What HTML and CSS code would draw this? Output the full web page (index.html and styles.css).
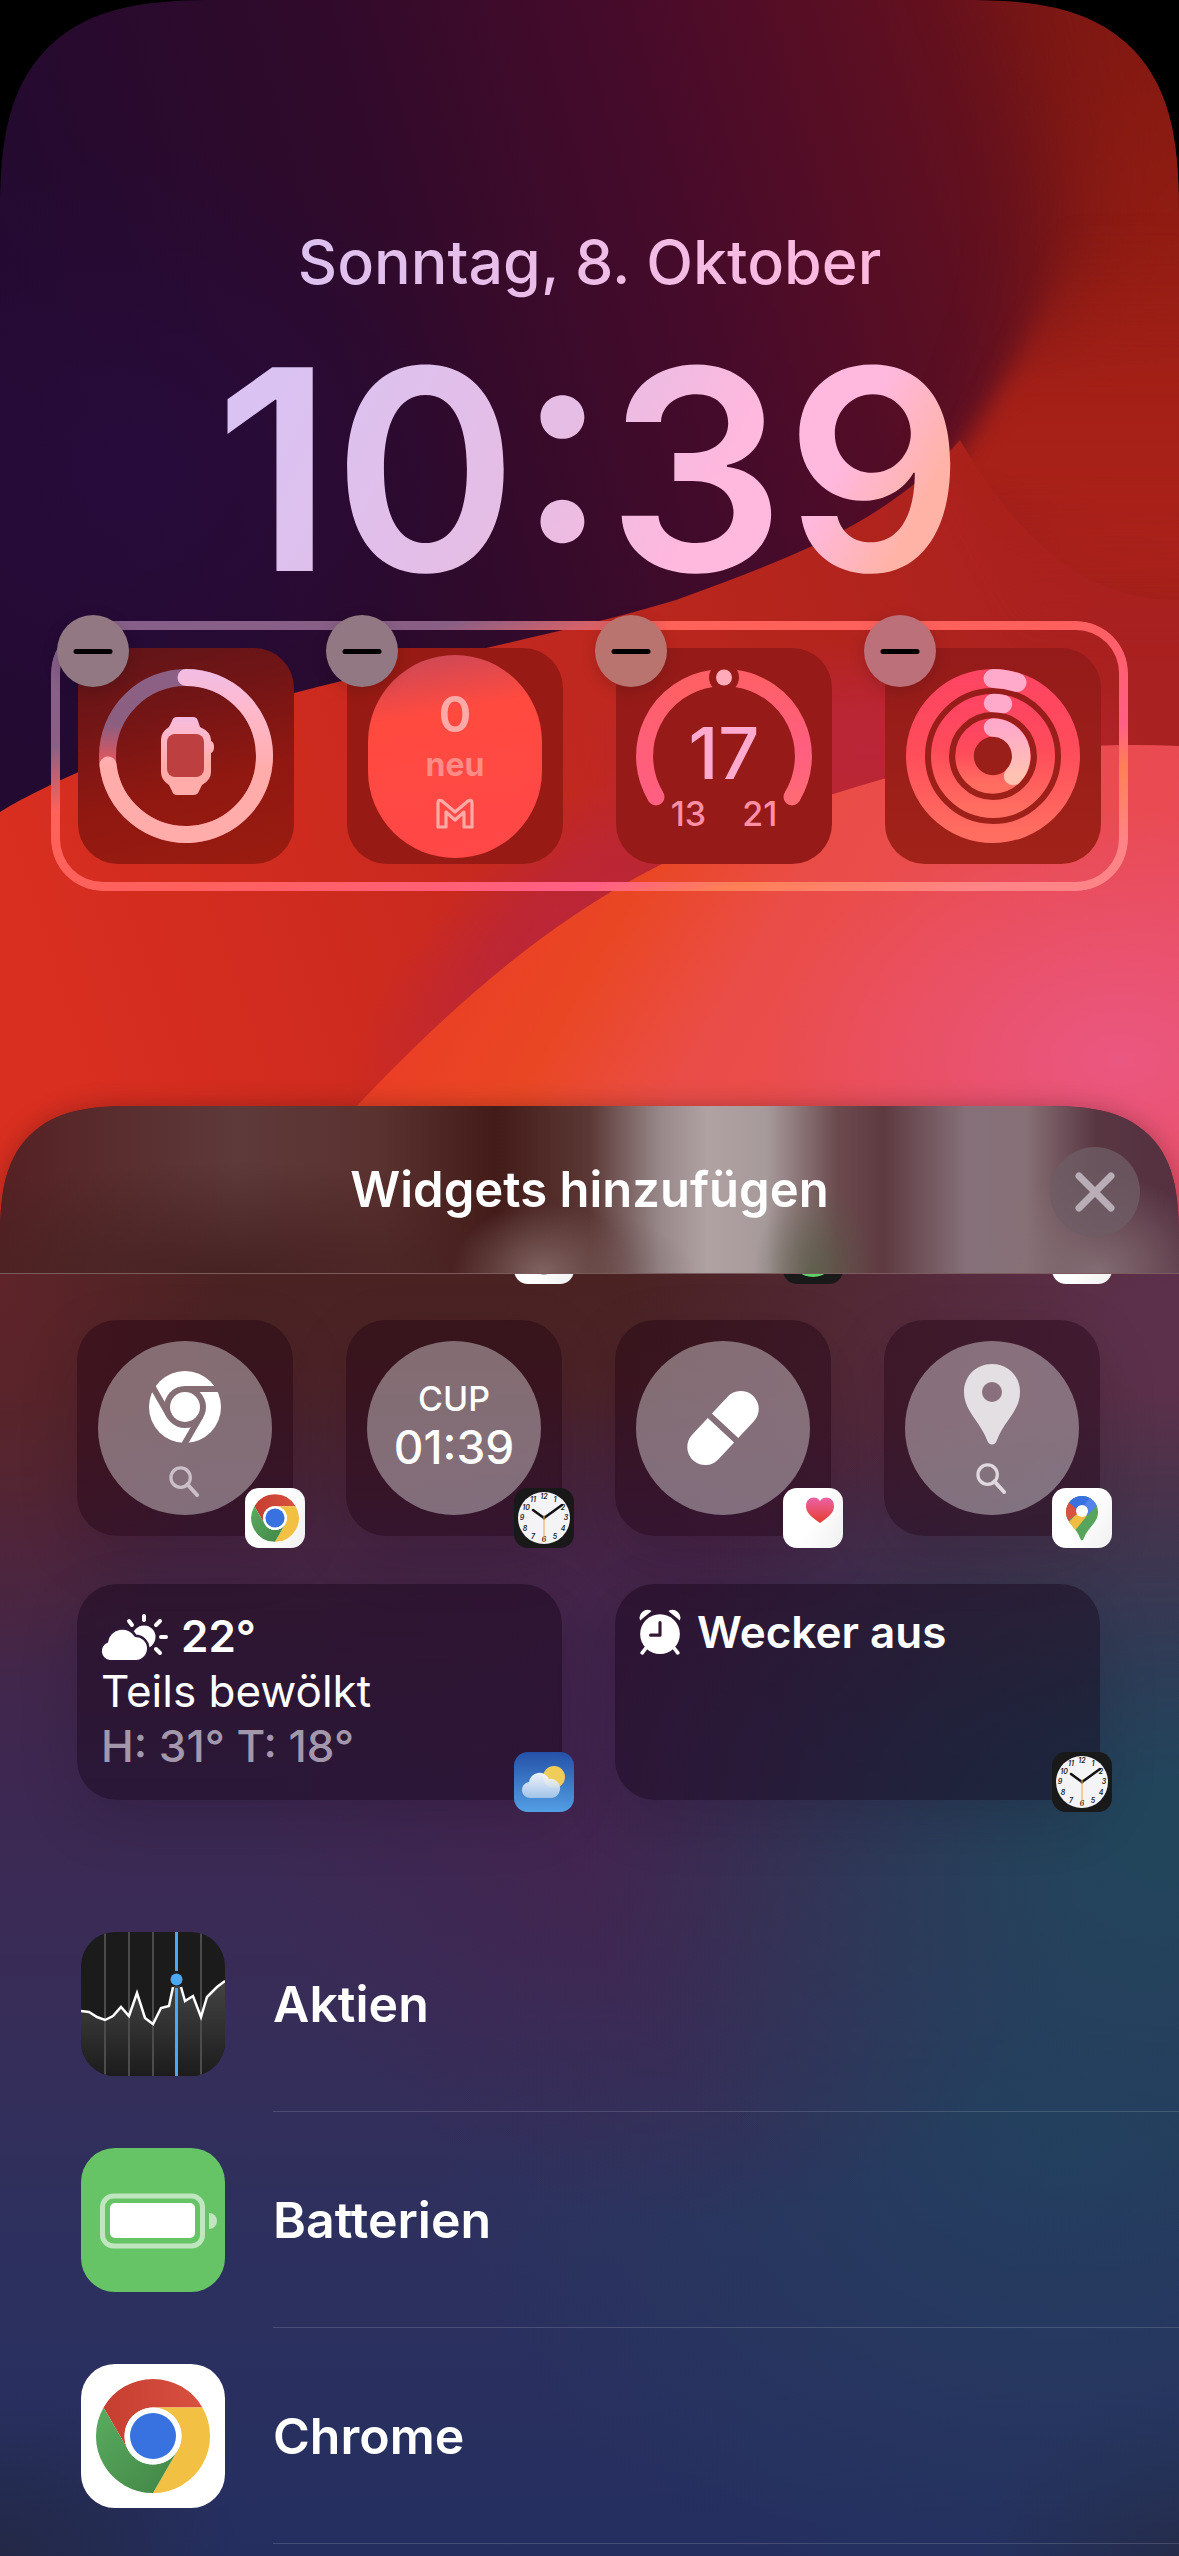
FILE: index.html
```
<!DOCTYPE html>
<html lang="de">
<head>
    <meta charset="UTF-8">
    <meta name="viewport" content="width=device-width, initial-scale=1.0">
    <title>Widgets hinzufügen</title>
    <link rel="stylesheet" href="styles.css">
</head>
<body>
    <!-- Shared gradients -->
    <svg class="defs" aria-hidden="true">
        <defs>
            <linearGradient id="chrome-red" x1="0" x2="1"><stop offset="0" stop-color="#c53e30"/><stop offset="1" stop-color="#d85040"/></linearGradient>
            <linearGradient id="chrome-green" x1="0" y1="0" x2="1" y2="1"><stop offset="0" stop-color="#5aac60"/><stop offset="1" stop-color="#418545"/></linearGradient>
            <linearGradient id="pink" x1="0" y1="0" x2="0" y2="1"><stop offset="0" stop-color="#ff4562"/><stop offset=".45" stop-color="#ff4c5a"/><stop offset="1" stop-color="#ff6e60"/></linearGradient>
        </defs>
    </svg>

    <!-- Shared icons -->
    <svg class="symbols" aria-hidden="true">
        <symbol id="chrome" viewBox="-72 -72 144 144">
            <path fill="url(#chrome-red)" d="M-49.4-28.5A57 57 0 0 1 49.4-28.5H0A28.5 28.5 0 0 0-24.7 14.25Z"/>
            <path fill="#f2c144" d="M49.4-28.5A57 57 0 0 1 0 57L24.7 14.25A28.5 28.5 0 0 0 0-28.5Z"/>
            <path fill="url(#chrome-green)" d="M0 57A57 57 0 0 1-49.4-28.5L-24.7 14.25A28.5 28.5 0 0 0 24.7 14.25Z"/>
            <circle r="28.5" fill="#fff"/>
            <circle r="23" fill="#3871e0"/>
        </symbol>
        <symbol id="clock" viewBox="0 0 60 60">
            <circle cx="30" cy="30" r="26" fill="#f4f4f7"/>
            <g class="clock-digits">
                <text x="30" y="11">12</text><text x="41" y="14">1</text><text x="49" y="22">2</text><text x="52" y="32">3</text>
                <text x="49" y="43">4</text><text x="41" y="51">5</text><text x="30" y="54">6</text><text x="19" y="51">7</text>
                <text x="11" y="43">8</text><text x="8" y="32">9</text><text x="12" y="22">10</text><text x="19" y="14">11</text>
            </g>
            <path d="M30 30 19 22M30 30 48 17" stroke="#111" stroke-width="2.5" stroke-linecap="round"/>
            <path d="M30 27V54" stroke="#efb35a" stroke-width="1.2"/>
            <circle cx="30" cy="30" r="1.5" fill="#8a6530"/>
        </symbol>
        <symbol id="lens" viewBox="0 0 32 32">
            <circle cx="12" cy="12" r="10" fill="none" stroke="currentColor" stroke-width="3.4"/>
            <path d="M19 19 29 30" stroke="currentColor" stroke-width="4" stroke-linecap="round"/>
        </symbol>
        <symbol id="minus" viewBox="0 0 72 72">
            <path d="M19 36.5H53" stroke="#000" stroke-width="5" stroke-linecap="round"/>
        </symbol>
    </svg>

    <main class="phone">
        <svg class="wallpaper" viewBox="0 0 1179 1300" preserveAspectRatio="none" aria-hidden="true">
            <defs>
                <linearGradient id="night" gradientUnits="userSpaceOnUse" x1="0" y1="360" x2="1050" y2="60">
                    <stop offset="0" stop-color="#220a30"/><stop offset=".35" stop-color="#2f0a2b"/><stop offset=".65" stop-color="#480b2a"/><stop offset=".85" stop-color="#5c0f22"/><stop offset="1" stop-color="#701418"/>
                </linearGradient>
                <linearGradient id="side" gradientUnits="userSpaceOnUse" x1="900" y1="0" x2="1020" y2="620">
                    <stop offset="0" stop-color="#7d1812"/><stop offset=".5" stop-color="#941d13"/><stop offset="1" stop-color="#ad2319"/>
                </linearGradient>
                <linearGradient id="fade" gradientUnits="userSpaceOnUse" x1="0" y1="230" x2="0" y2="640">
                    <stop offset="0" stop-color="#981e14" stop-opacity="0"/><stop offset=".4" stop-color="#a42017"/><stop offset=".6" stop-color="#a92118"/><stop offset="1" stop-color="#a92020" stop-opacity="0"/>
                </linearGradient>
                <linearGradient id="red" gradientUnits="userSpaceOnUse" x1="0" y1="960" x2="1100" y2="600">
                    <stop offset="0" stop-color="#d92f20"/><stop offset=".36" stop-color="#cb2a1e"/><stop offset=".55" stop-color="#bf281f"/><stop offset=".72" stop-color="#b5251c"/><stop offset="1" stop-color="#a92120"/>
                </linearGradient>
                <linearGradient id="orange" gradientUnits="userSpaceOnUse" x1="520" y1="850" x2="1050" y2="1160">
                    <stop offset="0" stop-color="#ea3f25"/><stop offset=".2" stop-color="#e94724"/><stop offset=".42" stop-color="#ea4d48"/><stop offset="1" stop-color="#e94a56"/>
                </linearGradient>
                <radialGradient id="glow"><stop offset="0" stop-color="#270b3b"/><stop offset="1" stop-color="#270b3b" stop-opacity="0"/></radialGradient>
                <radialGradient id="wine"><stop offset="0" stop-color="#bb2638"/><stop offset=".4" stop-color="#bb2638" stop-opacity=".8"/><stop offset="1" stop-color="#bb2638" stop-opacity="0"/></radialGradient>
                <radialGradient id="rose"><stop offset="0" stop-color="#ea5780"/><stop offset="1" stop-color="#ea5780" stop-opacity="0"/></radialGradient>
                <filter id="soft" x="-50%" y="-30%" width="200%" height="160%" color-interpolation-filters="sRGB"><feGaussianBlur stdDeviation="46"/></filter>
                <filter id="softer" x="-30%" y="-30%" width="160%" height="160%" color-interpolation-filters="sRGB"><feGaussianBlur stdDeviation="12"/></filter>
            </defs>
            <rect width="1179" height="1300" fill="url(#night)"/>
            <ellipse cx="130" cy="470" rx="380" ry="330" fill="url(#glow)"/>
            <path d="M960-150C1060 60 1100 210 1050 360C1020 450 980 540 920 640H1400V-150Z" fill="url(#side)" filter="url(#soft)"/>
            <path d="M0 812C60 775 180 728 294 693C420 660 560 635 676 600C800 555 890 520 960 440C1030 560 1100 600 1179 600V1300H0Z" fill="url(#red)"/>
            <path d="M1078 190C1060 280 1030 350 952 464L1040 660H1500V190Z" fill="url(#fade)" filter="url(#softer)"/>
            <ellipse cx="870" cy="750" rx="290" ry="110" fill="url(#wine)"/>
            <ellipse cx="570" cy="930" rx="280" ry="110" fill="url(#wine)" transform="rotate(-42 570 930)"/>
            <path d="M353 1110C480 975 590 890 720 838C850 780 1000 738 1179 746V1300H200Z" fill="url(#orange)"/>
            <ellipse cx="1120" cy="1060" rx="360" ry="250" fill="url(#rose)"/>
        </svg>

        <header class="lock">
            <p class="date">Sonntag, 8. Oktober</p>
            <p class="time">10:39</p>

            <section class="frame" aria-label="Aktive Widgets">
                <div class="tile">
                    <svg viewBox="0 0 216 216">
                        <defs>
                            <linearGradient id="track" x1="0" y1="0" x2="0" y2="1"><stop offset="0" stop-color="#8c6085"/><stop offset=".3" stop-color="#8c5f80"/><stop offset=".55" stop-color="#e6555c"/></linearGradient>
                            <linearGradient id="level" x1="0" y1="0" x2="0" y2="1"><stop offset="0" stop-color="#f3bce0"/><stop offset=".2" stop-color="#ffb9cc"/><stop offset=".6" stop-color="#ffacaa"/></linearGradient>
                        </defs>
                        <circle cx="108" cy="108" r="78.5" fill="none" stroke="url(#track)" stroke-width="17"/>
                        <path d="M108 29.5A78.5 78.5 0 1 1 30 117" fill="none" stroke="url(#level)" stroke-width="17" stroke-linecap="round"/>
                        <path fill="url(#level)" d="M99 69H115Q119 69 120 73L122 79Q133 84 133 92V93Q136 94 136 99T133 105V124Q133 132 124 137L121 143Q120 147 115 147H99Q95 147 94 143L91 137Q83 132 83 124V92Q83 84 91 79L94 73Q95 69 99 69Z"/>
                        <rect x="89" y="86" width="37" height="43" rx="8" fill="#bd3f40"/>
                    </svg>
                    <button class="remove" aria-label="Entfernen"><svg><use href="#minus"/></svg></button>
                </div>
                <div class="tile">
                    <div class="mail">
                        <span class="count">0</span>
                        <span class="unit">neu</span>
                        <svg class="gmail" viewBox="0 0 40 32"><path d="M3 29V5Q3 1 7 3L20 14 33 3Q37 1 37 5V29H29V14L20 22 11 14V29Z" fill="none" stroke="#ffaaa5" stroke-width="3.2" stroke-linejoin="round"/></svg>
                    </div>
                    <button class="remove" aria-label="Entfernen"><svg><use href="#minus"/></svg></button>
                </div>
                <div class="tile">
                    <svg viewBox="0 0 216 216">
                        <defs>
                            <linearGradient id="arc-left" x1="1" y1="0" x2="0" y2="1"><stop offset=".3" stop-color="#ff6065"/><stop offset="1" stop-color="#ff5f80"/></linearGradient>
                            <linearGradient id="arc-right" x1="0" y1="0" x2="0" y2="1"><stop offset="0" stop-color="#ff6068"/><stop offset=".6" stop-color="#ff5f80"/><stop offset="1" stop-color="#ff6a75"/></linearGradient>
                        </defs>
                        <path d="M40 149A78.5 78.5 0 0 1 96 30.5" fill="none" stroke="url(#arc-left)" stroke-width="17"/>
                        <path d="M120 30.5A78.5 78.5 0 0 1 176 149" fill="none" stroke="url(#arc-right)" stroke-width="17"/>
                        <circle cx="40" cy="149" r="8.5" fill="#ff5f80"/>
                        <circle cx="176" cy="149" r="8.5" fill="#ff6a75"/>
                        <circle cx="108" cy="29.5" r="15" fill="#961b18"/>
                        <circle cx="108" cy="29.5" r="8" fill="#ffabba"/>
                    </svg>
                    <div class="gauge">
                        <span class="now">17</span>
                        <span class="range"><span>13</span><span>21</span></span>
                    </div>
                    <button class="remove" aria-label="Entfernen"><svg><use href="#minus"/></svg></button>
                </div>
                <div class="tile">
                    <svg viewBox="0 0 216 216" fill="none">
                        <defs><linearGradient id="move" x1="0" y1="0" x2="0" y2="1"><stop offset="0" stop-color="#ffaaca"/><stop offset="1" stop-color="#ffc2b0"/></linearGradient></defs>
                        <circle cx="108" cy="108" r="77.5" stroke="url(#pink)" stroke-width="19"/>
                        <circle cx="108" cy="108" r="53" stroke="url(#pink)" stroke-width="18"/>
                        <circle cx="108" cy="108" r="28.5" stroke="url(#pink)" stroke-width="18.5"/>
                        <g stroke="#ffaaca" stroke-linecap="round">
                            <path d="M108 30.5A77.5 77.5 0 0 1 132 34.5" stroke-width="19"/>
                            <path d="M108 55A53 53 0 0 1 118 56" stroke-width="18.5"/>
                            <path d="M108 79.5A28.5 28.5 0 0 1 128 128" stroke="url(#move)" stroke-width="18.5"/>
                        </g>
                    </svg>
                    <button class="remove" aria-label="Entfernen"><svg><use href="#minus"/></svg></button>
                </div>
            </section>
        </header>

        <section class="sheet">
            <header class="sheet-head">
                <h1>Widgets hinzufügen</h1>
                <button class="close" aria-label="Schließen">
                    <svg viewBox="0 0 90 90"><path d="M29 29 61 61M61 29 29 61" stroke="#b9adb6" stroke-width="7" stroke-linecap="round"/></svg>
                </button>
            </header>

            <!-- Lower edge of the row that has scrolled under the header -->
            <div class="tiles scrolled">
                <span></span>
                <span class="cut"><i class="app white"><svg viewBox="0 0 60 60"><circle cx="30" cy="44" r="7" fill="#aaa"/></svg></i></span>
                <span class="cut"><i class="app black"><svg viewBox="0 0 60 60"><circle cx="30" cy="30" r="23" fill="#5fd068"/></svg></i></span>
                <span class="cut"><i class="app white"></i></span>
            </div>

            <div class="tiles">
                <a href="#chrome-widget" class="tile">
                    <svg viewBox="0 0 216 216">
                        <mask id="cuts">
                            <circle r="36" fill="#fff"/><circle r="21" fill="#000"/><circle r="15" fill="#fff"/>
                            <g stroke="#000" stroke-width="6"><path d="M0-18H40"/><path d="M0-18H40" transform="rotate(120)"/><path d="M0-18H40" transform="rotate(240)"/></g>
                        </mask>
                        <circle class="disc" cx="108" cy="108" r="87"/>
                        <g transform="translate(108 87)"><circle r="37" fill="#fff" mask="url(#cuts)"/></g>
                        <use href="#lens" x="92" y="146" width="31" height="31" color="#cbc0c9"/>
                    </svg>
                    <i class="app white"><svg><use href="#chrome"/></svg></i>
                </a>
                <a href="#clock-widget" class="tile">
                    <span class="round"><span class="city">CUP</span><span class="city-time">01:39</span></span>
                    <i class="app black"><svg><use href="#clock"/></svg></i>
                </a>
                <a href="#health-widget" class="tile">
                    <svg viewBox="0 0 216 216">
                        <circle class="disc" cx="108" cy="108" r="87"/>
                        <g transform="rotate(-47 108 108)" fill="#fff">
                            <path d="M105 90V126H82A18 18 0 0 1 82 90Z"/>
                            <path d="M111 90V126H134A18 18 0 0 0 134 90Z"/>
                        </g>
                    </svg>
                    <i class="app white"><svg viewBox="0 0 60 60"><defs><linearGradient id="heart" x1="0" y1="0" x2="0" y2="1"><stop offset="0" stop-color="#ea62a8"/><stop offset="1" stop-color="#e73d2c"/></linearGradient></defs><path fill="url(#heart)" d="M37 35C27 28 23 24 23 18C23 9 33 7 37 13C41 7 51 9 51 18C51 24 47 28 37 35Z"/></svg></i>
                </a>
                <a href="#maps-widget" class="tile">
                    <svg viewBox="0 0 216 216">
                        <circle class="disc" cx="108" cy="108" r="87"/>
                        <path fill="#e4dfe3" fill-rule="evenodd" d="M108 44C92 44 80 56 80 72C80 91 96 101 103 120C105 126 111 126 113 120C120 101 136 91 136 72C136 56 124 44 108 44ZM108 62A10 10 0 1 1 108 82A10 10 0 1 1 108 62Z"/>
                        <use href="#lens" x="92" y="143" width="31" height="31" color="#dfd9de"/>
                    </svg>
                    <i class="app white">
                        <svg viewBox="0 0 60 60">
                            <clipPath id="pin"><path d="M30 8C21 8 14 15 14 24C14 35 24 39 28 50Q30 55 32 50C36 39 46 35 46 24C46 15 39 8 30 8Z"/></clipPath>
                            <g clip-path="url(#pin)">
                                <path fill="#57a55c" d="M0 0H60V60H0Z"/>
                                <path fill="#f0bd42" d="M0 52 32 18 38 24 12 56Z"/>
                                <path fill="#d95140" d="M8 8H22L30 22 12 36Z"/>
                                <path fill="#3871e0" d="M14 12 34 0 42 8 28 24Z"/>
                                <path fill="#5383ec" d="M29 22 40 6 52 10 35 28Z"/>
                            </g>
                            <circle cx="30" cy="23" r="6" fill="#fff"/>
                        </svg>
                    </i>
                </a>

                <a href="#weather-widget" class="tile wide">
                    <span class="line strong">
                        <svg class="cloud" viewBox="0 0 68 48" fill="#fff">
                            <circle cx="43" cy="24" r="11.5"/>
                            <path d="M43 3V7M55 12 59 8M60 24H65M55 36 59 40M31 12 28 8" stroke="#fff" stroke-width="4" stroke-linecap="round"/>
                            <path class="cloud-body" d="M9 47A9 9 0 0 1 7 29.5A14.5 14.5 0 0 1 34 24A11.5 11.5 0 0 1 35 47Z"/>
                        </svg>
                        22°
                    </span>
                    <span class="line">Teils bewölkt</span>
                    <span class="line dim">H: 31° T: 18°</span>
                    <i class="app sky">
                        <svg viewBox="0 0 60 60">
                            <defs><linearGradient id="haze" x1="0" y1="0" x2="0" y2="1"><stop offset="0" stop-color="#fff"/><stop offset="1" stop-color="#a9c8ea"/></linearGradient></defs>
                            <circle cx="40" cy="25" r="11" fill="#f0cd5a"/>
                            <path fill="url(#haze)" opacity=".92" d="M17 46A8 8 0 0 1 15 30A10.5 10.5 0 0 1 35 27A9.5 9.5 0 0 1 38 46Z"/>
                        </svg>
                    </i>
                </a>
                <a href="#alarm-widget" class="tile wide">
                    <span class="line strong alarm">
                        <svg class="bell" viewBox="0 0 40 44">
                            <circle cx="20" cy="24" r="19" fill="#fff"/>
                            <path d="M6 38 3 42M34 38 37 42" stroke="#fff" stroke-width="3.5" stroke-linecap="round"/>
                            <path fill="#fff" d="M1 11A7.500 7.500 0 0 1 12 2ZM39 11A7.500 7.500 0 0 0 28 2Z"/>
                            <path d="M20 13V25H11" fill="none" stroke="#351736" stroke-width="3" stroke-linecap="round" stroke-linejoin="round"/>
                        </svg>
                        Wecker aus
                    </span>
                    <i class="app black"><svg><use href="#clock"/></svg></i>
                </a>
            </div>

            <ul class="apps">
                <li>
                    <a href="#aktien">
                        <svg class="icon dark" viewBox="0 0 144 144">
                            <defs><linearGradient id="stocks" x1="0" y1="0" x2="0" y2="1"><stop offset="0" stop-color="#444"/><stop offset="1" stop-color="#1c1c1c"/></linearGradient></defs>
                            <path fill="url(#stocks)" d="M0 79 8 80 24 88 32 84 40 75 48 84 56 61 64 86 72 92 80 76 88 74 93 54H99L104 69 112 64 120 85 126 65 136 55 144 49V144H0Z"/>
                            <path d="M24 0V144M48 0V144M72 0V144M120 0V144" stroke="#4c4c4c" stroke-width="2"/>
                            <path d="M0 79 8 80 16 85 24 88 32 84 40 75 48 84 56 61 64 86 72 92 80 76 88 74 92 55M100 55 104 69 112 64 120 85 126 65 136 55 144 49" fill="none" stroke="#fff" stroke-width="2.5"/>
                            <path d="M95.5 0V39M95.5 56V144" stroke="#4aa8f5" stroke-width="3"/>
                            <circle cx="95.5" cy="47.5" r="6" fill="#4aa8f5"/>
                        </svg>
                        <span>Aktien</span>
                    </a>
                </li>
                <li>
                    <a href="#batterien">
                        <svg class="icon green" viewBox="0 0 144 144">
                            <rect x="21.5" y="48" width="100" height="50" rx="11" fill="none" stroke="#fff" stroke-opacity=".58" stroke-width="5"/>
                            <rect x="29" y="55" width="85" height="35" rx="5" fill="#fff"/>
                            <path d="M128 65A8 8 0 0 1 128 81Z" fill="#fff" fill-opacity=".58"/>
                        </svg>
                        <span>Batterien</span>
                    </a>
                </li>
                <li>
                    <a href="#chrome-app">
                        <svg class="icon light"><use href="#chrome"/></svg>
                        <span>Chrome</span>
                    </a>
                </li>
            </ul>
        </section>
    </main>
</body>
</html>
```
FILE: styles.css
```
* {
    box-sizing: border-box;
}

body {
    margin: 0;
    background-color: #000;
    color: #fff;
    font-family: Inter, "Liberation Sans", sans-serif;
}

a {
    color: inherit;
    text-decoration: none;
}

button {
    border: none;
    padding: 0;
    cursor: pointer;
}

.defs {
    position: absolute;
    width: 0;
    height: 0;
}

.symbols {
    display: none;
}

.clock-digits {
    font-size: 7px;
    font-weight: 600;
    fill: #222;
    text-anchor: middle;
}

.phone {
    position: relative;
    display: flex;
    flex-direction: column;
    min-height: 100vh;
    overflow: hidden;
    border-radius: 156px 156px 0 0 / 180px 180px 0 0;
}

.wallpaper {
    position: absolute;
    top: 0;
    left: 0;
    width: 100%;
    height: 1300px;
}

/* Lock screen */
.lock {
    position: relative;
    padding: 222px 51px 215px;
}

.date,
.time {
    width: fit-content;
    margin: 0 auto;
    color: transparent;
    background-clip: text;
    -webkit-background-clip: text;
}

.date {
    font-size: 61px;
    font-weight: 500;
    line-height: 80px;
    background-image: linear-gradient(100deg, #dcc1f0, #ffb8de);
}

.time {
    margin-top: 43px;
    margin-bottom: 26px;
    font-size: 280px;
    font-weight: 600;
    line-height: 250px;
    background-image: linear-gradient(118deg, #dac2f2 10%, #e6bde4 45%, #ffb8de 65%, #ffb8de 78%, #ffb3a6 90%);
}

.frame,
.tiles {
    display: grid;
    grid-template-columns: repeat(4, 1fr);
    gap: 48px 53px;
}

.frame {
    position: relative;
    padding: 27px;
}

.frame::before {
    content: "";
    position: absolute;
    inset: 0;
    padding: 9px;
    border-radius: 52px;
    background: linear-gradient(163deg, #85608a 0%, #8a5f85 21%, #ff6259 32%, #ff605e 52%, #ff5f85 72%, #ff8055 79%, #ff8488 92%);
    mask: linear-gradient(#000 0 0) content-box exclude, linear-gradient(#000 0 0);
}

.tile {
    position: relative;
    display: flex;
    height: 216px;
    border-radius: 40px;
}

.tile > svg {
    width: 100%;
    height: 100%;
}

.frame .tile {
    justify-content: center;
    align-items: center;
    background-color: #971b14;
}

.frame .tile:first-child {
    background-image: linear-gradient(165deg, #5e1519, #731516 30%, #8f1811 60%, #9b1c10);
}

.frame .tile:nth-child(3) {
    background-color: #961b18;
}

.frame .tile:nth-child(4) {
    background-image: linear-gradient(#941b1a, #a12218);
}

.remove {
    position: absolute;
    top: -33px;
    left: -21px;
    width: 72px;
    height: 72px;
    border-radius: 50%;
    background-color: #927883;
    box-shadow: 0 4px 16px rgba(0, 0, 0, 0.15);
}

.tile:nth-child(3) .remove {
    background-color: #b97470;
}

.tile:nth-child(4) .remove {
    background-color: #bc7079;
}

.remove svg {
    display: block;
    width: 100%;
    height: 100%;
}

.mail {
    display: flex;
    flex-direction: column;
    align-items: center;
    width: 174px;
    height: 203px;
    padding-top: 29px;
    border-radius: 87px;
    background: linear-gradient(170deg, #c5485a, #ff4a3f 30%, #ff4748);
    color: #ffaaa8;
}

.count {
    font-size: 50px;
    font-weight: 600;
    line-height: 61px;
}

.unit {
    font-size: 32px;
    font-weight: 700;
    line-height: 39px;
    color: #ff8b86;
}

.gmail {
    width: 40px;
    height: 32px;
    margin-top: 14px;
}

.gauge {
    position: absolute;
    inset: 0;
    display: flex;
    flex-direction: column;
    align-items: center;
    padding-top: 66px;
}

.now {
    font-size: 72px;
    font-weight: 500;
    line-height: 78px;
    color: #ffaace;
}

.range {
    display: flex;
    gap: 36px;
    font-size: 34px;
    font-weight: 500;
    line-height: 44px;
    color: #ff8fa6;
}

/* Widget gallery */
.sheet {
    position: relative;
    flex: 1;
    overflow: hidden;
    border-radius: 104px 104px 0 0 / 124px 124px 0 0;
    box-shadow: 0 0 24px rgba(0, 0, 0, 0.25);
    background:
        radial-gradient(ellipse 600px 440px at 100% 50%, #22455c 10%, rgba(34, 69, 92, 0)),
        radial-gradient(ellipse 420px 420px at 58% 48%, #44234f, rgba(68, 35, 79, 0)),
        radial-gradient(ellipse 560px 460px at 100% 16%, #5c304b 10%, rgba(92, 48, 75, 0)),
        radial-gradient(ellipse 240px 400px at 0% 12%, #5e242a, rgba(94, 36, 42, 0)),
        radial-gradient(ellipse 620px 460px at 90% 72%, #233e60, rgba(35, 62, 96, 0)),
        radial-gradient(ellipse 240px 160px at 0% 100%, #232846, rgba(35, 40, 70, 0)),
        radial-gradient(ellipse 200px 160px at 100% 100%, #252a48, rgba(37, 42, 72, 0)),
        linear-gradient(#4a2222 12%, #4e2429 19%, #472543 30%, #3d2852 47%, #372d58 62%, #2d305e 78%, #242f60 100%);
}

@supports (corner-shape: squircle) {
    .phone {
        border-radius: 220px 220px 0 0;
        corner-shape: superellipse(1.5);
    }

    .sheet {
        border-radius: 136px 136px 0 0;
        corner-shape: superellipse(1.5);
    }
}

.sheet-head {
    display: flex;
    align-items: center;
    justify-content: center;
    position: relative;
    height: 168px;
    border-bottom: 1px solid #7b5c5e;
    background:
        radial-gradient(ellipse 90px 70px at 46% 100%, rgba(134, 106, 104, 0.9), rgba(134, 106, 104, 0)),
        radial-gradient(ellipse 60px 90px at 69% 100%, rgba(82, 92, 66, 0.7), rgba(82, 92, 66, 0)),
        radial-gradient(ellipse 120px 100px at 93% 100%, rgba(136, 115, 121, 0.9), rgba(136, 115, 121, 0)),
        radial-gradient(ellipse 460px 110px at 20% 100%, #472222, rgba(71, 34, 34, 0)),
        linear-gradient(90deg, #552023, #5e3a3a 20%, #5a3230 32%, #431b18 42%, #5b3835 50%, #98888a 56%, #b0a1a2 60%, #a79a9b 65%, #6b4a4e 71%, #5e3a40 75%, #86707a 82%, #877076 87%, #583641 93%, #553040);
}

.sheet-head h1 {
    margin: 0;
    font-size: 49px;
    font-weight: 600;
    line-height: 60px;
}

.close {
    position: absolute;
    top: 41px;
    right: 39px;
    width: 90px;
    height: 90px;
    border-radius: 50%;
    background-color: rgba(110, 92, 100, 0.8);
}

.tiles {
    padding: 0 79px 0 77px;
}

.scrolled {
    height: 46px;
}

.cut {
    position: relative;
    clip-path: inset(0 -12px 0 0);
}

.cut .app {
    top: -50px;
    bottom: auto;
}

.tiles .tile {
    background-color: rgba(28, 0, 16, 0.42);
    box-shadow: 0 20px 60px rgba(20, 0, 20, 0.16);
}

.disc {
    fill: rgba(255, 255, 255, 0.38);
}

.round {
    display: flex;
    flex-direction: column;
    align-items: center;
    width: 174px;
    height: 174px;
    margin: 21px;
    padding-top: 36px;
    border-radius: 50%;
    background-color: rgba(255, 255, 255, 0.38);
}

.city {
    font-size: 34px;
    font-weight: 500;
    line-height: 44px;
}

.city-time {
    font-size: 46px;
    font-weight: 500;
    line-height: 52px;
}

.app {
    position: absolute;
    right: -12px;
    bottom: -12px;
    width: 60px;
    height: 60px;
    border-radius: 14px;
}

.app svg {
    display: block;
    width: 100%;
    height: 100%;
}

.white {
    background: linear-gradient(120deg, #fff 50%, #f0f0f0);
}

.black {
    background-color: #19191a;
}

.sky {
    background: linear-gradient(#2552a8, #539fe4);
}

.tiles .wide {
    grid-column: span 2;
    flex-direction: column;
    padding: 25px 24px;
    background-color: rgba(16, 0, 20, 0.42);
}

.line {
    display: flex;
    align-items: center;
    font-size: 44px;
    font-weight: 400;
    line-height: 55px;
}

.strong {
    gap: 12px;
    font-weight: 600;
}

.dim {
    font-weight: 500;
    color: #a398ab;
}

.line .cloud {
    width: 68px;
    height: 48px;
}

.cloud-body {
    stroke: #30183a;
    stroke-width: 5px;
    paint-order: stroke;
}

.alarm {
    gap: 16px;
    line-height: 46px;
}

.line .bell {
    width: 42px;
    height: 46px;
}

.apps {
    list-style-type: none;
    margin: 96px 0 0;
    padding: 0 0 12px 81px;
}

.apps a {
    display: flex;
    align-items: center;
    gap: 48px;
    height: 216px;
}

.apps span {
    display: flex;
    align-items: center;
    flex: 1;
    height: 216px;
    border-bottom: 1px solid rgba(255, 255, 255, 0.14);
    font-size: 50px;
    font-weight: 600;
}

.icon {
    width: 144px;
    height: 144px;
    border-radius: 34px;
}

.dark {
    background-color: #1b1b1b;
}

.green {
    background-color: #66c466;
}

.light {
    background-color: #fff;
}
```
